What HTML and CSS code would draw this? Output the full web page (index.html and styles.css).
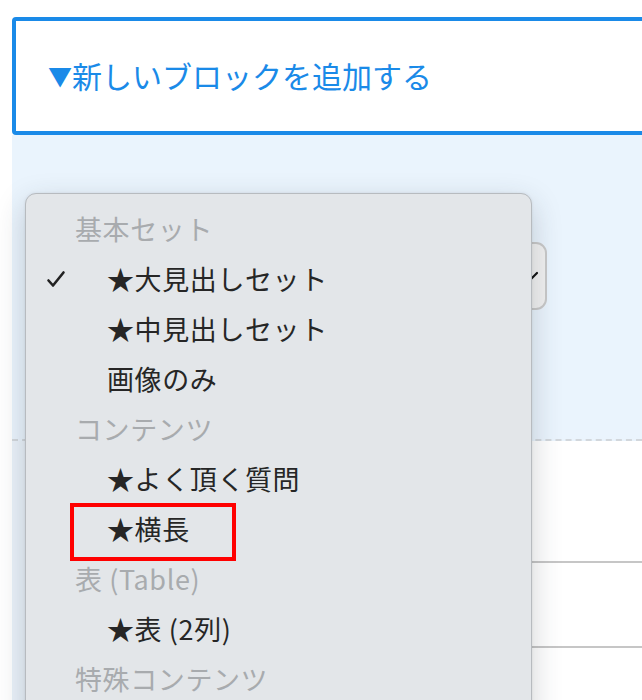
FILE: index.html
```html
<!DOCTYPE html>
<html lang="ja">
<head>
<meta charset="utf-8">
<title>ブロック追加</title>
<link rel="stylesheet" href="styles.css">
</head>
<body>
<div class="page">
  <div class="add-block">
    <span class="add-title"><span class="tri">▼</span>新しいブロックを追加する</span>
  </div>
  <div class="panel">
    <div class="select-box">
      <svg class="chev" width="16" height="10" viewBox="0 0 16 10"><path d="M2 2 L8 8 L14 2" fill="none" stroke="#111" stroke-width="2.2" stroke-linecap="round" stroke-linejoin="round"/></svg>
    </div>
  </div>
  <div class="rows">
    <div class="rows-inner">
      <div class="row row-tall"></div>
      <div class="row"></div>
      <div class="row"></div>
    </div>
  </div>

  <div class="menu">
    <div class="opt head">基本セット</div>
    <div class="opt item checked">
      <svg class="check" width="20" height="20" viewBox="0 0 20 20"><path d="M2.5 10.5 L7 15.5 L17.5 2.5" fill="none" stroke="#222" stroke-width="2.6" stroke-linecap="round" stroke-linejoin="round"/></svg>
      ★大見出しセット
    </div>
    <div class="opt item">★中見出しセット</div>
    <div class="opt item">画像のみ</div>
    <div class="opt head">コンテンツ</div>
    <div class="opt item">★よく頂く質問</div>
    <div class="opt item">★横長</div>
    <div class="opt head">表 (Table)</div>
    <div class="opt item">★表 (2列)</div>
    <div class="opt head">特殊コンテンツ</div>
    <div class="highlight"></div>
  </div>
</div>
</body>
</html>
```

FILE: styles.css
```css
html, body {
  margin: 0;
  padding: 0;
  background: #ffffff;
  overflow: hidden;
  font-family: "Noto Sans CJK JP", "Noto Sans", sans-serif;
}

.page {
  position: relative;
  width: 642px;
  height: 700px;
  padding-top: 17px;
  box-sizing: border-box;
}

.add-block {
  margin-left: 12px;
  margin-right: -20px;
  height: 118px;
  box-sizing: border-box;
  border: 4px solid #1a8ae8;
  border-radius: 4px;
  background: #ffffff;
  display: flex;
  align-items: center;
  padding-left: 32px;
  padding-bottom: 2px;
}

.add-title {
  color: #1a8ae8;
  font-size: 30px;
  line-height: 1;
  display: flex;
  align-items: center;
}

.tri {
  font-size: 24px;
  margin-top: 2px;
}

.panel {
  margin-left: 12px;
  height: 306px;
  box-sizing: border-box;
  background: #eaf4fd;
  border-bottom: 2px dashed #d2d7dc;
  padding-top: 107px;
  padding-left: 60px;
}

.select-box {
  width: 475px;
  height: 68px;
  box-sizing: border-box;
  border: 2px solid #c9c9c9;
  border-radius: 11px;
  background: #f1f1f1;
  display: flex;
  align-items: center;
  justify-content: flex-end;
  padding-right: 6px;
}

.chev {
  display: block;
}

.rows {
  margin-left: 12px;
  height: 260px;
  background: #eaf2fa;
  padding-left: 20px;
}

.rows-inner {
  background: #ffffff;
  height: 100%;
}

.row {
  height: 83px;
  border-bottom: 2px solid #c6c6c6;
}

.row-tall {
  height: 120px;
}

.menu {
  position: absolute;
  left: 25px;
  top: 193px;
  width: 507px;
  height: 560px;
  box-sizing: border-box;
  background: #e3e6e9;
  border: 1px solid #b7bbbf;
  border-radius: 11px;
  box-shadow: 0 10px 30px rgba(40, 50, 60, 0.22), 0 0 3px rgba(0, 0, 0, 0.08);
  padding-top: 10px;
}

.opt {
  height: 50px;
  line-height: 50px;
  font-size: 27px;
  letter-spacing: 0.6px;
  white-space: nowrap;
  position: relative;
}

.head {
  color: #a8abae;
  padding-left: 49px;
}

.item {
  color: #262626;
  padding-left: 81px;
}

.check {
  position: absolute;
  left: 20px;
  top: 16px;
}

.highlight {
  position: absolute;
  left: 44px;
  top: 309px;
  width: 166px;
  height: 58px;
  box-sizing: border-box;
  border: 4px solid #ff0000;
}
```
